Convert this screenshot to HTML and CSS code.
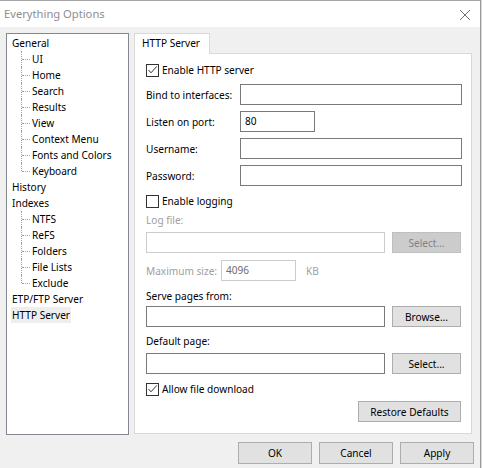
FILE: index.html
```html
<!DOCTYPE html>
<html>
<head>
<meta charset="utf-8">
<title>Everything Options</title>
<link rel="stylesheet" href="styles.css">
</head>
<body>
<div class="window">
  <div class="titlebar">
    <span class="title">Everything Options</span>
    <svg class="close" width="12" height="12" viewBox="0 0 12 12"><path d="M1 1 L11 11 M11 1 L1 11" stroke="#6f6f6f" stroke-width="1" fill="none"/></svg>
  </div>
  <div class="client">
    <div class="main">
      <ul class="tree">
        <li class="node"><span>General</span></li>
        <li class="child"><span>UI</span></li>
        <li class="child"><span>Home</span></li>
        <li class="child"><span>Search</span></li>
        <li class="child"><span>Results</span></li>
        <li class="child"><span>View</span></li>
        <li class="child"><span>Context Menu</span></li>
        <li class="child"><span>Fonts and Colors</span></li>
        <li class="child last"><span>Keyboard</span></li>
        <li class="node"><span>History</span></li>
        <li class="node"><span>Indexes</span></li>
        <li class="child"><span>NTFS</span></li>
        <li class="child"><span>ReFS</span></li>
        <li class="child"><span>Folders</span></li>
        <li class="child"><span>File Lists</span></li>
        <li class="child last"><span>Exclude</span></li>
        <li class="node"><span>ETP/FTP Server</span></li>
        <li class="node selected"><span>HTTP Server</span></li>
      </ul>
      <div class="tabs">
        <div class="tabstrip"><div class="tab">HTTP Server</div></div>
        <div class="panel">
          <div class="row check-row mt8"><span class="cb checked"><svg width="13" height="13" viewBox="0 0 13 13"><path d="M2.5 6 L5 8.8 L10.8 2.4" stroke="#333" stroke-width="1" fill="none"/></svg></span><span>Enable HTTP server</span></div>
          <div class="row field-row mt6"><span class="lbl">Bind to interfaces:</span><span class="input grow"></span></div>
          <div class="row field-row mt6"><span class="lbl">Listen on port:</span><span class="input port">80</span></div>
          <div class="row field-row mt6"><span class="lbl">Username:</span><span class="input grow"></span></div>
          <div class="row field-row mt6"><span class="lbl">Password:</span><span class="input grow"></span></div>
          <div class="row check-row mt7"><span class="cb"></span><span>Enable logging</span></div>
          <div class="row label-row mt4 disabled">Log file:</div>
          <div class="row field-row mt5 btn-pad"><span class="input grow dis"></span><span class="btn small dis-btn">Select...</span></div>
          <div class="row field-row mt7"><span class="lbl short disabled">Maximum size:</span><span class="input size dis">4096</span><span class="unit disabled">KB</span></div>
          <div class="row label-row mt8">Serve pages from:</div>
          <div class="row field-row mt3 btn-pad"><span class="input grow"></span><span class="btn small">Browse...</span></div>
          <div class="row label-row mt7">Default page:</div>
          <div class="row field-row mt5 btn-pad"><span class="input grow"></span><span class="btn small">Select...</span></div>
          <div class="row check-row mt7"><span class="cb checked"><svg width="13" height="13" viewBox="0 0 13 13"><path d="M2.5 6 L5 8.8 L10.8 2.4" stroke="#333" stroke-width="1" fill="none"/></svg></span><span>Allow file download</span></div>
          <div class="row field-row mt4 right btn-pad"><span class="btn restore">Restore Defaults</span></div>
        </div>
      </div>
    </div>
    <div class="footer">
      <span class="btn dlg">OK</span>
      <span class="btn dlg">Cancel</span>
      <span class="btn dlg">Apply</span>
    </div>
  </div>
</div>
</body>
</html>
```
FILE: styles.css
```css
html {
  background: #d8d8d8;
}
body {
  margin: 0;
  width: 482px;
  height: 468px;
  overflow: hidden;
  font-family: "Noto Sans", "DejaVu Sans", sans-serif;
  font-size: 10.1px;
  color: #000;
}
.window {
  width: 480px;
  height: 467px;
  border-top: 1px solid #a3a3a3;
  border-right: 1px solid #9a9a9a;
  background: #f0f0f0;
  display: flex;
  flex-direction: column;
}
.titlebar {
  height: 26px;
  background: #fff;
  display: flex;
  align-items: center;
  justify-content: space-between;
  padding: 0 9px 0 4px;
}
.title {
  font-size: 11.2px;
  color: #8e8e8e;
  margin-top: -1px;
}
.close {
  display: block;
  margin-top: 1px;
}
.client {
  flex: 1;
  display: flex;
  flex-direction: column;
}
.main {
  display: flex;
  gap: 5px;
  padding: 6px 0 0 6px;
}
.tree {
  list-style: none;
  margin: 0;
  padding: 1px 0 0 4px;
  width: 123px;
  height: 402px;
  box-sizing: border-box;
  border: 1px solid #828790;
  background: #fff;
}
.tree li {
  height: 16px;
  line-height: 16px;
  white-space: nowrap;
  position: relative;
}
.tree li span {
  padding: 0 1px;
  display: inline-block;
  height: 16px;
}
.tree .child {
  padding-left: 20px;
}
.tree .child::before {
  content: "";
  position: absolute;
  left: 10px;
  top: 0;
  height: 16px;
  border-left: 1px dotted #a0a0a0;
}
.tree .child.last::before {
  height: 8px;
}
.tree .child::after {
  content: "";
  position: absolute;
  left: 11px;
  top: 8px;
  width: 8px;
  border-top: 1px dotted #a0a0a0;
}
.tree .selected span {
  background: #eeeeee;
}
.tabs {
  width: 338px;
  display: flex;
  flex-direction: column;
}
.tabstrip {
  height: 20px;
  display: flex;
}
.tab {
  width: 76px;
  height: 21px;
  box-sizing: border-box;
  border: 1px solid #d9d9d9;
  border-bottom: none;
  background: #fff;
  padding-left: 7px;
  line-height: 19px;
  position: relative;
  z-index: 1;
}
.panel {
  height: 381px;
  box-sizing: border-box;
  border: 1px solid #d9d9d9;
  background: #fff;
  padding: 0 9px 0 11px;
  display: flex;
  flex-direction: column;
}
.row {
  display: flex;
  align-items: center;
  white-space: nowrap;
}
.check-row { height: 16px; }
.field-row { height: 21px; }
.label-row { height: 14px; }
.btn-pad { padding-right: 1px; }
.right { justify-content: flex-end; }
.mt3 { margin-top: 3px; }
.mt4 { margin-top: 4px; }
.mt5 { margin-top: 5px; }
.mt6 { margin-top: 6px; }
.mt7 { margin-top: 7px; }
.mt8 { margin-top: 8px; }
.cb {
  width: 13px;
  height: 13px;
  box-sizing: border-box;
  border: 1px solid #333;
  background: #fff;
  margin-right: 3px;
  position: relative;
}
.cb svg {
  position: absolute;
  left: -1px;
  top: -1px;
}
.lbl {
  width: 94px;
  flex: none;
}
.lbl.short {
  width: 75px;
}
.disabled {
  color: #a0a0a0;
}
.input {
  height: 21px;
  box-sizing: border-box;
  border: 1px solid #7a7a7a;
  background: #fff;
  padding-left: 4px;
  line-height: 19px;
}
.input.grow { flex: 1; }
.input.port { width: 75px; }
.input.size { width: 75px; }
.input.dis {
  border-color: #cccccc;
  color: #6d6d6d;
}
.unit {
  margin-left: 10px;
}
.btn {
  height: 21px;
  box-sizing: border-box;
  border: 1px solid #adadad;
  background: #e1e1e1;
  display: flex;
  align-items: center;
  justify-content: center;
  flex: none;
}
.btn.small {
  width: 69px;
  margin-left: 7px;
}
.btn.dis-btn {
  background: #cccccc;
  border-color: #bfbfbf;
  color: #838383;
}
.btn.restore {
  width: 103px;
}
.footer {
  display: flex;
  justify-content: flex-end;
  gap: 7px;
  margin-top: 7px;
  padding-right: 6px;
}
.btn.dlg {
  width: 74px;
  height: 22px;
}
```
